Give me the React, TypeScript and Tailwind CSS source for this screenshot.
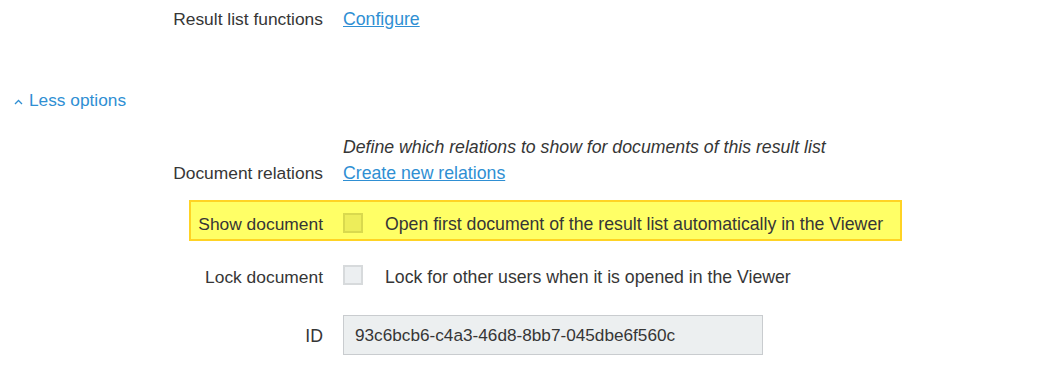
import React from 'react';

const Label: React.FC<{ children: React.ReactNode; className?: string }> = ({ children, className = '' }) => (
  <div className={`shrink-0 text-right text-[#363636] ${className}`}>{children}</div>
);

const Checkbox: React.FC<{ highlighted?: boolean }> = ({ highlighted }) => (
  <div
    className={`w-5 h-5 shrink-0 border-2 ${
      highlighted ? 'bg-[#eded5a] border-[#d9d94e]' : 'bg-[#eceff1] border-[#d7dadc]'
    }`}
  />
);

export default function App() {
  return (
    <div
      className="w-[1039px] h-[387px] bg-white text-[17.7px] overflow-hidden"
      style={{ fontFamily: '"Liberation Sans", Arial, sans-serif' }}
    >
      {/* Result list functions */}
      <div className="flex items-center h-9 pt-[2px]">
        <Label className="w-[323px] text-[17.4px]">Result list functions</Label>
        <a href="#" className="ml-5 text-[#2f8fd3] underline">Configure</a>
      </div>

      {/* Less options toggle */}
      <div className="flex items-center h-9 mt-[46px] pt-[2px] pl-[14px] text-[#2f8fd3]">
        <svg width="9" height="6" viewBox="0 0 9 6" className="mr-[6px] mt-[1px]">
          <polyline points="1,5 4.5,1.5 8,5" fill="none" stroke="#2f8fd3" strokeWidth="1.3" />
        </svg>
        <span className="text-[17.3px]">Less options</span>
      </div>

      {/* Document relations */}
      <div className="flex items-center h-6 mt-4 pt-[2px]">
        <div className="w-[323px] shrink-0" />
        <span className="ml-5 italic text-[#363636]">Define which relations to show for documents of this result list</span>
      </div>
      <div className="flex items-center h-6 mt-[2px] pt-[2px]">
        <Label className="w-[323px] text-[17.4px]">Document relations</Label>
        <a href="#" className="ml-5 text-[#2f8fd3] underline">Create new relations</a>
      </div>

      {/* Show document (highlighted) */}
      <div className="mt-4 ml-[189px] w-[713px] h-[41px] border-2 border-[#ffd324] bg-[#ffff66] flex items-center pt-1">
        <Label className="w-[132px] pt-[4px] text-[17.4px]">Show document</Label>
        <div className="ml-5">
          <Checkbox highlighted />
        </div>
        <span className="ml-[22px] pt-[4px] text-[#363636]">Open first document of the result list automatically in the Viewer</span>
      </div>

      {/* Lock document */}
      <div className="flex items-center h-9 mt-4">
        <Label className="w-[323px] pt-[4px] text-[17.4px]">Lock document</Label>
        <div className="ml-5">
          <Checkbox />
        </div>
        <span className="ml-[22px] pt-[4px] text-[#363636]">Lock for other users when it is opened in the Viewer</span>
      </div>

      {/* ID */}
      <div className="flex items-center h-10 mt-[22px]">
        <Label className="w-[323px] pt-[2px]">ID</Label>
        <div className="ml-5 w-[420px] h-10 border border-[#c9cccf] bg-[#eceff0] flex items-center pl-[11px] pt-[2px] text-[17.2px] text-[#363636]">
          93c6bcb6-c4a3-46d8-8bb7-045dbe6f560c
        </div>
      </div>
    </div>
  );
}
